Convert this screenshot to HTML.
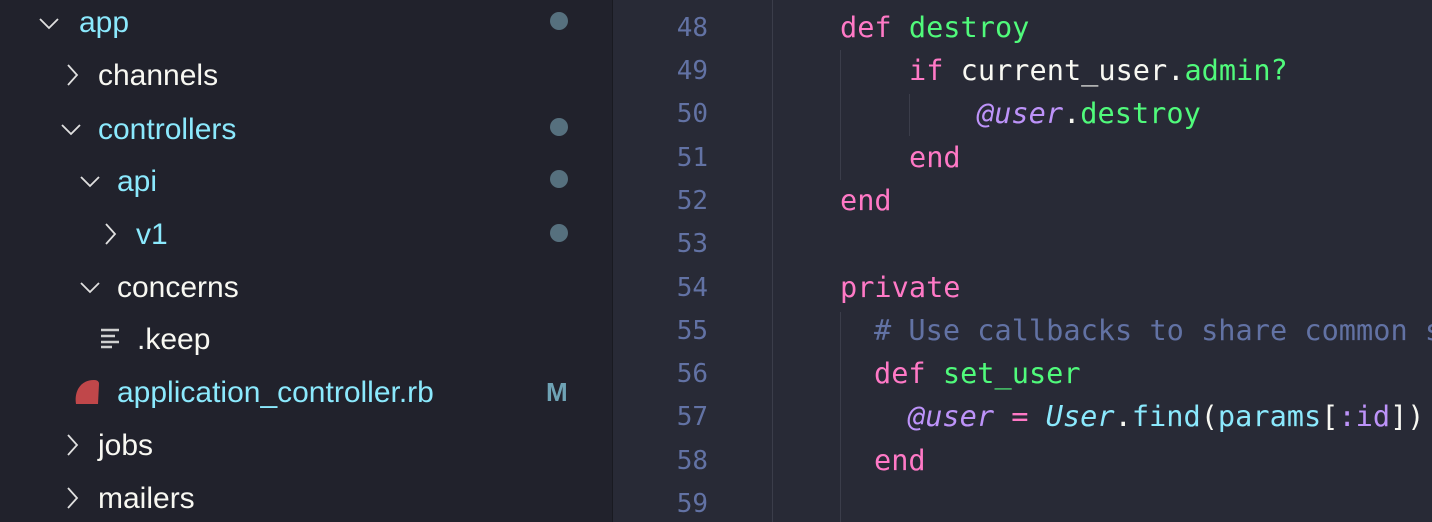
<!DOCTYPE html>
<html style="overflow:hidden"><head><meta charset="utf-8"><style>
html,body{overflow:hidden}
body{margin:0;width:1432px;height:522px;overflow:hidden;background:#282a36;position:relative;font-family:"Liberation Sans",sans-serif}
#side{position:absolute;left:0;top:0;width:612px;height:522px;background:#21222c;border-right:1px solid #191a21}
.r{position:absolute;height:52px;line-height:52px;font-size:30px;color:#f8f8f2;white-space:nowrap;letter-spacing:0}
.c{color:#8be9fd}
.dot{position:absolute;left:550px;width:18px;height:18px;border-radius:50%;background:#56707e}
.ch{position:absolute;width:22px;height:22px}
.ln{position:absolute;left:620px;width:88px;text-align:right;font-family:"DejaVu Sans Mono",monospace;font-size:26px;color:#6272a4}
.code{position:absolute;font-family:"DejaVu Sans Mono",monospace;font-size:28.6px;white-space:pre;color:#f8f8f2}
.g{position:absolute;width:1px;background:#3b3d4a}
.k{color:#ff79c6}.f{color:#50fa7b}.p{color:#bd93f9;font-style:italic}.cm{color:#6272a4}.cy{color:#8be9fd}.cyi{color:#8be9fd;font-style:italic}
#wrap{position:absolute;left:0;top:0;width:1432px;height:522px;overflow:hidden}
</style></head><body><div id="wrap">
<div id="side">
<svg class="ch" style="left:38px;top:12px" viewBox="0 0 22 22"><path d="M2 7 L11 16 L20 7" fill="none" stroke="#e0e0e0" stroke-width="1.8"/></svg>
<div class="r c" style="left:79px;top:-3px">app</div><div class="dot" style="top:12px"></div>
<svg class="ch" style="left:62px;top:64px" viewBox="0 0 22 22"><path d="M6 1 L15 11 L6 21" fill="none" stroke="#e0e0e0" stroke-width="1.8"/></svg>
<div class="r" style="left:98px;top:50px">channels</div>
<svg class="ch" style="left:60px;top:118px" viewBox="0 0 22 22"><path d="M2 7 L11 16 L20 7" fill="none" stroke="#e0e0e0" stroke-width="1.8"/></svg>
<div class="r c" style="left:98px;top:104px">controllers</div><div class="dot" style="top:118px"></div>
<svg class="ch" style="left:79px;top:170px" viewBox="0 0 22 22"><path d="M2 7 L11 16 L20 7" fill="none" stroke="#e0e0e0" stroke-width="1.8"/></svg>
<div class="r c" style="left:117px;top:156px">api</div><div class="dot" style="top:170px"></div>
<svg class="ch" style="left:100px;top:223px" viewBox="0 0 22 22"><path d="M6 1 L15 11 L6 21" fill="none" stroke="#e0e0e0" stroke-width="1.8"/></svg>
<div class="r c" style="left:136px;top:209px">v1</div><div class="dot" style="top:224px"></div>
<svg class="ch" style="left:79px;top:276px" viewBox="0 0 22 22"><path d="M2 7 L11 16 L20 7" fill="none" stroke="#e0e0e0" stroke-width="1.8"/></svg>
<div class="r" style="left:117px;top:262px">concerns</div>
<svg style="position:absolute;left:100px;top:327px" width="24" height="22" viewBox="0 0 24 22"><path d="M1 3H19M1 9H15M1 15H19M1 20H12" stroke="#d0d0d0" stroke-width="2.4"/></svg>
<div class="r" style="left:137px;top:314px">.keep</div>
<svg style="position:absolute;left:74px;top:378px" width="26" height="28" viewBox="0 0 26 28"><path d="M2 26 C0 14 6 2 20 2 Q25 2 25 6 L24 26 Z" fill="#c0474a"/></svg>
<div class="r c" style="left:117px;top:367px">application_controller.rb</div>
<div class="r" style="left:546px;top:366px;color:#6fa3b5;font-weight:bold;font-size:26px">M</div>
<svg class="ch" style="left:62px;top:434px" viewBox="0 0 22 22"><path d="M6 1 L15 11 L6 21" fill="none" stroke="#e0e0e0" stroke-width="1.8"/></svg>
<div class="r" style="left:98px;top:420px">jobs</div>
<svg class="ch" style="left:62px;top:487px" viewBox="0 0 22 22"><path d="M6 1 L15 11 L6 21" fill="none" stroke="#e0e0e0" stroke-width="1.8"/></svg>
<div class="r" style="left:98px;top:473px">mailers</div>
</div>
<div class="g" style="left:772px;top:0;height:522px"></div>
<div class="g" style="left:840px;top:50px;height:130px"></div>
<div class="g" style="left:909px;top:94px;height:42px"></div>
<div class="g" style="left:840px;top:312px;height:210px"></div>
<div class="ln" style="top:13px">48</div>
<div class="ln" style="top:56px">49</div>
<div class="ln" style="top:99px">50</div>
<div class="ln" style="top:143px">51</div>
<div class="ln" style="top:186px">52</div>
<div class="ln" style="top:229px">53</div>
<div class="ln" style="top:273px">54</div>
<div class="ln" style="top:316px">55</div>
<div class="ln" style="top:359px">56</div>
<div class="ln" style="top:402px">57</div>
<div class="ln" style="top:446px">58</div>
<div class="ln" style="top:489px">59</div>
<div class="code" style="left:840px;top:10px"><span class="k">def</span> <span class="f">destroy</span></div>
<div class="code" style="left:909px;top:53px"><span class="k">if</span> current_user.<span class="f">admin?</span></div>
<div class="code" style="left:977px;top:96px"><span class="p">@user</span>.<span class="f">destroy</span></div>
<div class="code" style="left:909px;top:140px"><span class="k">end</span></div>
<div class="code" style="left:840px;top:183px"><span class="k">end</span></div>
<div class="code" style="left:840px;top:270px"><span class="k">private</span></div>
<div class="code cm" style="left:874px;top:313px"># Use callbacks to share common s</div>
<div class="code" style="left:874px;top:356px"><span class="k">def</span> <span class="f">set_user</span></div>
<div class="code" style="left:908px;top:399px"><span class="p">@user</span> <span class="k">=</span> <span class="cyi">User</span>.<span class="cy">find</span>(<span class="cy">params</span>[<span class="p" style="font-style:normal">:id</span>])</div>
<div class="code" style="left:874px;top:443px"><span class="k">end</span></div>
</div></body></html>
